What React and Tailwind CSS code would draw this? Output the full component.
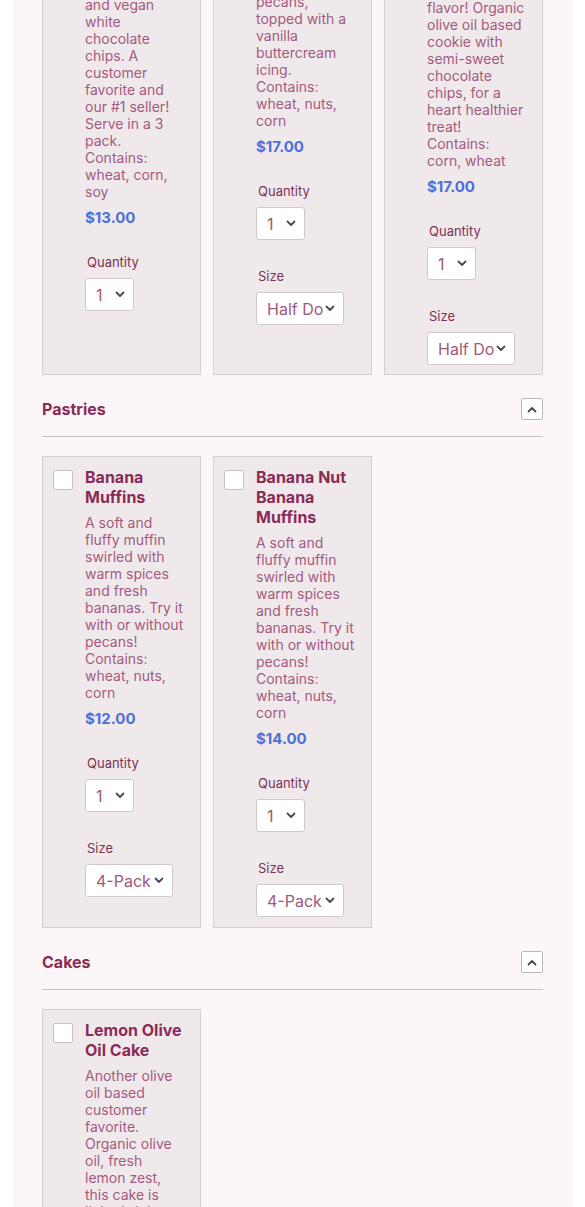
import React from 'react';

const rowOne = [
  {
    id: 'c1',
    top: 'pt-[16px]',
    desc: 'and vegan white chocolate chips. A customer favorite and our #1 seller! Serve in a 3 pack.',
    allergens: 'wheat, corn, soy',
    price: '$13.00',
    sizes: null,
  },
  {
    id: 'c2',
    top: 'pt-[13px]',
    desc: 'pecans, topped with a vanilla buttercream icing.',
    allergens: 'wheat, nuts, corn',
    price: '$17.00',
    sizes: ['Half Dozen', 'Dozen'],
  },
  {
    id: 'c3',
    top: 'pt-[19px]',
    desc: 'flavor! Organic olive oil based cookie with semi-sweet chocolate chips, for a heart healthier treat!',
    allergens: 'corn, wheat',
    price: '$17.00',
    sizes: ['Half Dozen', 'Dozen'],
  },
];

const pastries = [
  {
    id: 'p1',
    title: 'Banana Muffins',
    desc: 'A soft and fluffy muffin swirled with warm spices and fresh bananas. Try it with or without pecans!',
    allergens: 'wheat, nuts, corn',
    price: '$12.00',
    sizes: ['4-Pack', '6-Pack'],
  },
  {
    id: 'p2',
    title: 'Banana Nut Banana Muffins',
    desc: 'A soft and fluffy muffin swirled with warm spices and fresh bananas. Try it with or without pecans!',
    allergens: 'wheat, nuts, corn',
    price: '$14.00',
    sizes: ['4-Pack', '6-Pack'],
  },
];

const cakes = [
  {
    id: 'k1',
    title: 'Lemon Olive Oil Cake',
    desc: 'Another olive oil based customer favorite. Organic olive oil, fresh lemon zest, this cake is light, bright and perfect for any celebration.',
    allergens: 'wheat, corn',
    price: '$38.00',
    sizes: ['6 inch', '8 inch'],
  },
];

function Chevron({ up }) {
  return (
    <svg width="10" height="7" viewBox="0 0 10 7" fill="none">
      <path
        d={up ? 'M1.5 5.5L5 2L8.5 5.5' : 'M1.5 1.5L5 5L8.5 1.5'}
        stroke="#4b4b4b"
        strokeWidth="1.8"
        strokeLinecap="round"
        strokeLinejoin="round"
      />
    </svg>
  );
}

function Picker({ label, options, width, className }) {
  return (
    <div className={className}>
      <div className="pl-[2px] text-[13px] leading-[16px] text-[#7b3354]">{label}</div>
      <div className={`relative mt-[8px] h-[33px] ${width}`}>
        <select className="h-full w-full appearance-none rounded-[3px] border border-[#d2c8cc] bg-white pl-[10px] pr-[20px] text-[16px] text-[#a0587a] outline-none">
          {options.map((o) => (
            <option key={o}>{o}</option>
          ))}
        </select>
        <span className="pointer-events-none absolute right-[9px] top-[13px]">
          <Chevron />
        </span>
      </div>
    </div>
  );
}

function ProductCard({ item, top = 'pt-[10px]', bottom = 'pb-[10px]' }) {
  return (
    <div className={`flex gap-[12px] border border-[#dacdd2] bg-[#f0e9ec] pl-[10px] pr-[15px] ${top} ${bottom}`}>
      <div className="w-[20px] shrink-0">
        {item.title && (
          <div className="mt-[3px] h-[20px] w-[20px] rounded-[2px] border border-[#cbbfc4] bg-white" />
        )}
      </div>
      <div className="min-w-0 flex-1">
        {item.title && (
          <h3 className="mb-[7px] text-[16px] font-bold leading-[20px] text-[#8a2b55]">{item.title}</h3>
        )}
        <p className="text-[14px] leading-[17px] text-[#a35a7d]">
          {item.desc}
          <br />
          Contains: {item.allergens}
        </p>
        <div className="mt-[8px] text-[15px] font-bold leading-[20px] text-[#4d6fd8]">{item.price}</div>
        <Picker label="Quantity" options={['1', '2', '3', '4']} width="w-[49px]" className="mt-[26px]" />
        {item.sizes && (
          <Picker label="Size" options={item.sizes} width="w-[88px]" className="mt-[28px]" />
        )}
      </div>
    </div>
  );
}

function SectionHeader({ title }) {
  return (
    <div className="mt-[23px] flex items-center justify-between border-b border-[#cdbdc4] pb-[16px]">
      <h2 className="text-[16px] font-bold leading-[22px] text-[#8a2b55]">{title}</h2>
      <button className="flex h-[22px] w-[22px] items-center justify-center rounded-[2px] border border-[#bdb3b8] bg-white">
        <Chevron up />
      </button>
    </div>
  );
}

export default function App() {
  return (
    <div className="min-h-[1207px] overflow-hidden bg-white" style={{ fontFamily: 'Inter, "Noto Sans", sans-serif' }}>
      <div className="mx-[13px] min-h-[1207px] w-[560px] bg-[#fdf6f9] pl-[29px] pr-[30px]">
        {/* first row, scrolled part way */}
        <div className="-mt-[21px] grid grid-cols-3 gap-[12px]">
          {rowOne.map((item) => (
            <ProductCard key={item.id} item={item} top={item.top} bottom="pb-[9px]" />
          ))}
        </div>

        <SectionHeader title="Pastries" />
        <div className="mt-[19px] grid grid-cols-3 gap-[12px]">
          {pastries.map((item) => (
            <ProductCard key={item.id} item={item} />
          ))}
        </div>

        <SectionHeader title="Cakes" />
        <div className="mt-[19px] grid grid-cols-3 gap-[12px]">
          {cakes.map((item) => (
            <ProductCard key={item.id} item={item} />
          ))}
        </div>
      </div>
    </div>
  );
}
